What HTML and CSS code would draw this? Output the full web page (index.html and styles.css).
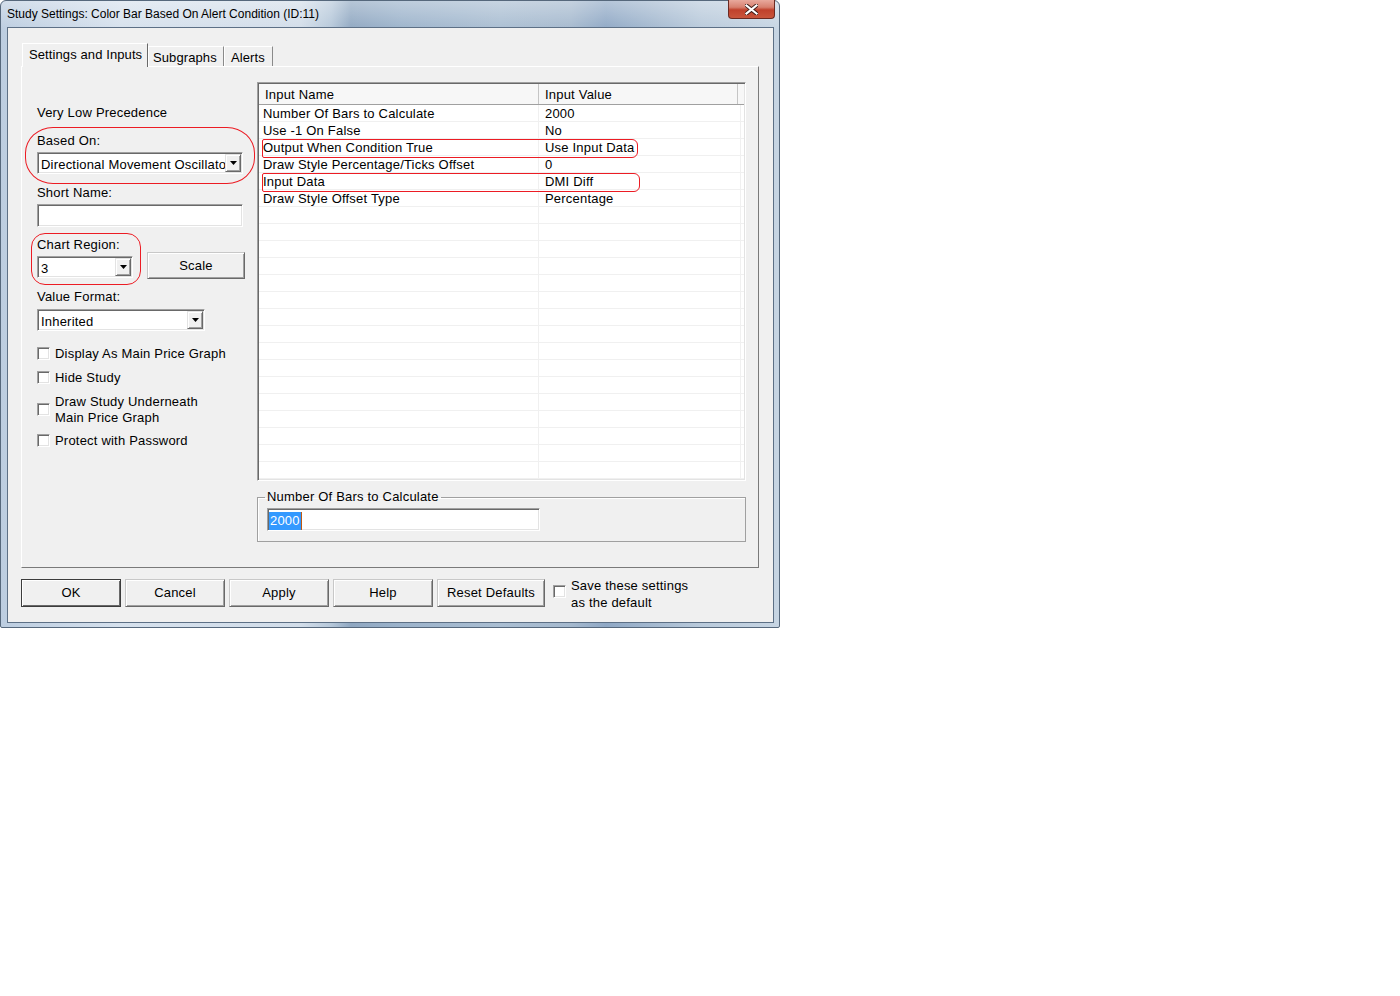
FILE: index.html
```html
<!DOCTYPE html>
<html lang="en">
<head>
    <meta charset="UTF-8">
    <meta name="viewport" content="width=device-width, initial-scale=1.0">
    <title>Study Settings</title>
    <link rel="stylesheet" href="styles.css">
</head>
<body>

    <div class="window">
        <div class="titlebar">
            <span>Study Settings: Color Bar Based On Alert Condition (ID:11)</span>
            <div class="close">
                <svg width="13" height="11" viewBox="0 0 13 11">
                    <path d="M1.5 1.5 L11.5 9.5 M11.5 1.5 L1.5 9.5" stroke="#3a1a16" stroke-width="4" stroke-linecap="square"/>
                    <path d="M1.5 1.5 L11.5 9.5 M11.5 1.5 L1.5 9.5" stroke="#ffffff" stroke-width="2.2" stroke-linecap="square"/>
                </svg>
            </div>
        </div>

        <div class="client">
            <div class="tabs">
                <div class="tab active">Settings and Inputs</div>
                <div class="tab sub">Subgraphs</div>
                <div class="tab alerts">Alerts</div>
            </div>

            <div class="panel">
                <div class="left">
                    <div class="label first">Very Low Precedence</div>

                    <div class="label gap12">Based On:</div>
                    <div class="combo wide">
                        <div class="value">Directional Movement Oscillator</div>
                        <div class="drop"><svg width="7" height="4"><polygon points="0,0 7,0 3.5,4" fill="#000"/></svg></div>
                    </div>

                    <div class="label gap10">Short Name:</div>
                    <div class="field"></div>

                    <div class="label gap9">Chart Region:</div>
                    <div class="region">
                        <div class="combo small">
                            <div class="value">3</div>
                            <div class="drop"><svg width="7" height="4"><polygon points="0,0 7,0 3.5,4" fill="#000"/></svg></div>
                        </div>
                        <div class="button scale">Scale</div>
                    </div>

                    <div class="label gap9">Value Format:</div>
                    <div class="combo medium">
                        <div class="value">Inherited</div>
                        <div class="drop"><svg width="7" height="4"><polygon points="0,0 7,0 3.5,4" fill="#000"/></svg></div>
                    </div>

                    <div class="check c1"><div class="box"></div><div class="text">Display As Main Price Graph</div></div>
                    <div class="check c2"><div class="box"></div><div class="text">Hide Study</div></div>
                    <div class="check c3"><div class="box"></div><div class="text">Draw Study Underneath<br>Main Price Graph</div></div>
                    <div class="check c4"><div class="box"></div><div class="text">Protect with Password</div></div>
                </div>

                <div class="right">
                    <div class="list">
                        <div class="head">
                            <div>Input Name</div>
                            <div>Input Value</div>
                            <div></div>
                        </div>
                        <div class="row"><div>Number Of Bars to Calculate</div><div>2000</div><div></div></div>
                        <div class="row"><div>Use -1 On False</div><div>No</div><div></div></div>
                        <div class="row"><div>Output When Condition True</div><div>Use Input Data</div><div></div></div>
                        <div class="row"><div>Draw Style Percentage/Ticks Offset</div><div>0</div><div></div></div>
                        <div class="row"><div>Input Data</div><div>DMI Diff</div><div></div></div>
                        <div class="row"><div>Draw Style Offset Type</div><div>Percentage</div><div></div></div>
                        <div class="row"><div></div><div></div><div></div></div>
                        <div class="row"><div></div><div></div><div></div></div>
                        <div class="row"><div></div><div></div><div></div></div>
                        <div class="row"><div></div><div></div><div></div></div>
                        <div class="row"><div></div><div></div><div></div></div>
                        <div class="row"><div></div><div></div><div></div></div>
                        <div class="row"><div></div><div></div><div></div></div>
                        <div class="row"><div></div><div></div><div></div></div>
                        <div class="row"><div></div><div></div><div></div></div>
                        <div class="row"><div></div><div></div><div></div></div>
                        <div class="row"><div></div><div></div><div></div></div>
                        <div class="row"><div></div><div></div><div></div></div>
                        <div class="row"><div></div><div></div><div></div></div>
                        <div class="row"><div></div><div></div><div></div></div>
                        <div class="row"><div></div><div></div><div></div></div>
                        <div class="row"><div></div><div></div><div></div></div>
                    </div>

                    <fieldset class="group">
                        <legend>Number Of Bars to Calculate</legend>
                        <div class="field number"><span class="selected">2000</span></div>
                    </fieldset>
                </div>
            </div>

            <div class="buttons">
                <div class="button default">OK</div>
                <div class="button">Cancel</div>
                <div class="button">Apply</div>
                <div class="button">Help</div>
                <div class="button reset">Reset Defaults</div>
                <div class="box save-box"></div>
                <div class="save-text">Save these settings<br>as the default</div>
            </div>
        </div>

        <!-- red pen marks drawn over the dialog -->
        <div class="mark mark-based"></div>
        <div class="mark mark-region"></div>
        <div class="mark mark-output"></div>
        <div class="mark mark-input"></div>
    </div>

</body>
</html>
```

FILE: styles.css
```css
body {
    margin: 0;
    background-color: white;
    font-family: "Liberation Sans", Arial, sans-serif;
    font-size: 13px;
    letter-spacing: 0.2px;
    color: black;
}

/* window frame with the glass title bar */
.window {
    position: relative;
    width: 780px;
    height: 628px;
    box-sizing: border-box;
    border: 1px solid #56687c;
    border-radius: 6px 6px 2px 2px;
    padding: 0 5px 4px 6px;
    background:
        linear-gradient(to bottom, rgba(255,255,255,0.35), rgba(255,255,255,0) 30px),
        linear-gradient(to right, #bccde0 0, #d6e1ed 120px, #d2dde9 300px, #b6c8da 330px, #8fa7c1 350px, #9cb3cb 400px, #aabed2 500px, #a5b9ce 570px, #8fa8c5 605px, #a3b8cf 650px, #b9cadb 700px, #c7d5e3 780px);
}

.titlebar {
    position: relative;
    height: 26px;
    line-height: 27px;
    font-size: 12px;
    letter-spacing: 0;
}

.close {
    position: absolute;
    top: -1px;
    right: -1px;
    width: 47px;
    height: 19px;
    box-sizing: border-box;
    border: 1px solid #6b2a22;
    border-top: none;
    border-radius: 0 0 4px 4px;
    background: linear-gradient(to bottom, #e8a99d 0, #d7806f 40%, #c0412c 55%, #c9553c 100%);
    display: flex;
    align-items: center;
    justify-content: center;
}

.client {
    height: 596px;
    box-sizing: border-box;
    border: 1px solid #5d7086;
    background-color: #f0f0f0;
}

/* tab strip */
.tabs {
    display: flex;
    align-items: flex-end;
    height: 23px;
    margin-top: 15px;
    padding-left: 14px;
    letter-spacing: 0.1px;
}
.tab {
    position: relative;
    height: 20px;
    box-sizing: border-box;
    line-height: 16px;
    padding-top: 3px;
    border: 1px solid;
    border-color: #ffffff #8a8a8a #8a8a8a #ffffff;
    border-bottom: none;
    background-color: #f0f0f0;
    white-space: nowrap;
}
.tab.active {
    height: 24px;
    margin-bottom: -1px;
    width: 126px;
    padding-left: 6px;
    z-index: 1;
    border-color: #ffffff #696969 #696969 #ffffff;
}
.tab.sub {
    width: 76px;
    padding-left: 4px;
}
.tab.alerts {
    width: 49px;
    padding-left: 6px;
}

.panel {
    display: flex;
    width: 738px;
    height: 502px;
    box-sizing: border-box;
    margin-left: 13px;
    border: 1px solid;
    border-color: #ffffff #7a7a7a #7a7a7a #ffffff;
    padding: 15px 0 0 15px;
}

/* left column */
.left {
    width: 220px;
    display: flex;
    flex-direction: column;
    align-items: flex-start;
}
.label {
    height: 16px;
    line-height: 18px;
    white-space: nowrap;
}
.label.first { margin-top: 22px; }
.label.gap12 { margin-top: 12px; }
.label.gap10 { margin-top: 10px; }
.label.gap9 { margin-top: 9px; }

.combo, .field, .list {
    box-sizing: border-box;
    border: 1px solid;
    border-color: #a0a0a0 #ffffff #ffffff #a0a0a0;
    box-shadow: inset 1px 1px #696969, inset -1px -1px #e3e3e3;
    background-color: white;
}
.combo {
    display: flex;
    height: 22px;
    padding: 1px;
    margin-top: 4px;
}
.combo .value {
    flex: 1;
    overflow: hidden;
    white-space: nowrap;
    line-height: 16px;
    padding: 3px 0 0 2px;
}
.combo .drop {
    width: 16px;
    height: 18px;
    box-sizing: border-box;
    border: 1px solid;
    border-color: #e3e3e3 #696969 #696969 #e3e3e3;
    box-shadow: inset 1px 1px #ffffff, inset -1px -1px #a0a0a0;
    background-color: #f0f0f0;
    display: flex;
    align-items: center;
    justify-content: center;
}
.combo.wide { width: 206px; }
.combo.small { width: 96px; margin-top: 4px; }
.combo.medium { width: 168px; margin-top: 5px; }

.field {
    width: 206px;
    height: 23px;
    margin-top: 4px;
}

.region {
    display: flex;
    align-items: flex-start;
    gap: 14px;
}

.button {
    box-sizing: border-box;
    height: 28px;
    width: 100px;
    line-height: 26px;
    text-align: center;
    border: 1px solid;
    border-color: #c8c8c8 #696969 #696969 #c8c8c8;
    box-shadow: inset 1px 1px #ffffff, inset -1px -1px #a0a0a0;
    background-color: #f0f0f0;
    white-space: nowrap;
}
.button.scale {
    width: 98px;
    height: 27px;
    line-height: 26px;
}

/* check boxes under the value format */
.check {
    display: flex;
    align-items: flex-start;
    gap: 5px;
}
.check .text {
    line-height: 16px;
    padding-top: 1px;
}
.check .box { margin-top: 2px; }
.check.c1 { margin-top: 14px; }
.check.c2 { margin-top: 7px; }
.check.c3 { margin-top: 7px; }
.check.c3 .box { margin-top: 10px; }
.check.c4 { margin-top: 6px; }

.box {
    width: 13px;
    height: 13px;
    box-sizing: border-box;
    border: 1px solid;
    border-color: #a0a0a0 #ffffff #ffffff #a0a0a0;
    box-shadow: inset 1px 1px #696969, inset -1px -1px #e3e3e3;
    background-color: white;
    flex-shrink: 0;
}

/* right column: inputs list */
.right {
    width: 489px;
}
.list {
    width: 489px;
    padding: 1px;
}
.head {
    display: grid;
    grid-template-columns: 280px 199px 1fr;
    height: 21px;
    box-sizing: border-box;
    border-bottom: 1px solid #a0a0a0;
    background-color: #f7f7f7;
}
.head > div {
    line-height: 16px;
    padding: 3px 0 0 6px;
    border-right: 1px solid #c5c5c5;
    white-space: nowrap;
}
.head > div:last-child {
    border-right: none;
}
.row {
    display: grid;
    grid-template-columns: 280px 202px 1fr;
    height: 17px;
    box-sizing: border-box;
    border-bottom: 1px solid #f0f0f0;
}
.row > div {
    height: 16px;
    box-sizing: border-box;
    line-height: 16px;
    padding: 1px 0 0 4px;
    border-right: 1px solid #f0f0f0;
    white-space: nowrap;
}
.row > div:nth-child(2) {
    padding-left: 6px;
}
.row > div:last-child {
    border-right: none;
}

.group {
    width: 489px;
    box-sizing: border-box;
    margin: 8px 0 0 0;
    padding: 0 0 10px 7px;
    border: 1px solid #a0a0a0;
    box-shadow: inset 1px 1px #ffffff;
}
.group legend {
    padding: 0 2px;
    line-height: 16px;
    font-size: 13px;
}
.field.number {
    width: 273px;
    margin: 3px 0 0 2px;
    padding: 2px 0 0 1px;
}
.selected {
    display: inline-block;
    line-height: 18px;
    margin-top: 1px;
    padding: 0 1px;
    background-color: #3399ff;
    color: white;
    border-right: 1px solid #c05a12;
}

/* bottom buttons */
.buttons {
    display: flex;
    align-items: flex-start;
    gap: 4px;
    margin-top: 11px;
    padding-left: 13px;
}
.button.default {
    border-color: #3c3c3c;
    box-shadow: inset 1px 1px #ffffff, inset -1px -1px #696969;
}
.button.reset {
    width: 108px;
}
.save-box {
    margin: 6px 0 0 4px;
}
.save-text {
    line-height: 17px;
    margin: -2px 0 0 1px;
}

/* annotation marks */
.mark {
    position: absolute;
    box-sizing: border-box;
    border: 1px solid #ec1c24;
}
.mark-based {
    left: 24px;
    top: 126px;
    width: 230px;
    height: 57px;
    border-radius: 28px / 26px;
}
.mark-region {
    left: 30px;
    top: 232px;
    width: 110px;
    height: 52px;
    border-radius: 14px;
}
.mark-output {
    left: 261px;
    top: 138px;
    width: 376px;
    height: 19px;
    border-radius: 2px 6px 6px 2px;
}
.mark-input {
    left: 261px;
    top: 172px;
    width: 378px;
    height: 19px;
    border-radius: 2px 6px 6px 2px;
}
```
